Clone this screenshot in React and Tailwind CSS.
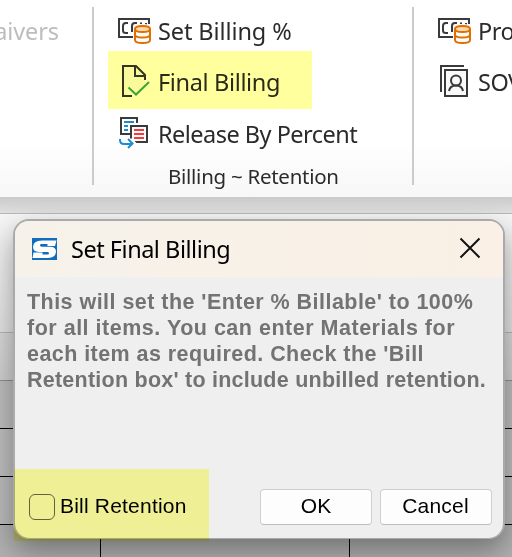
const UI = "font-['Noto_Sans',sans-serif]";
const ARIAL = "font-['Liberation_Sans',sans-serif]";

function BillingIcon() {
  return (
    <svg className="shrink-0" width="34" height="28" viewBox="0 0 34 28" fill="none">
      <path d="M16 20H1V2h30v5" stroke="#3a3a3a" strokeWidth="2" />
      <path d="M10 6H8Q5 6 5 9v4.500Q5 16 8 16h2M19 6h-2Q14 6 14 9v6M22 6.500h2M28 6v3" stroke="#3a3a3a" strokeWidth="2" />
      <path d="M17 12q0-3 7.500-3t7.500 3v11q0 3-7.500 3t-7.500-3z" fill="white" stroke="white" strokeWidth="4" />
      <path d="M17 12v11q0 3 7.500 3t7.500-3V12" fill="#fafafa" />
      <ellipse cx="24.500" cy="12" rx="7.200" ry="3" fill="#ffd9ad" />
      <path d="M17 12q0-3 7.500-3t7.500 3-7.500 3-7.500-3v11q0 3 7.500 3t7.500-3V12M17 17.500q0 3 7.500 3t7.500-3" stroke="#df7000" strokeWidth="2" />
    </svg>
  );
}

function FinalIcon() {
  return (
    <svg className="mt-px shrink-0" width="34" height="34" viewBox="0 0 34 34" fill="none">
      <path d="M5 2h13l9 9v9L18 29l-5-6H8l2 9H5z" fill="#fafa9a" />
      <path d="M14 32H5V2h13l9 9v5M17 2v10h10" stroke="#353522" strokeWidth="2" />
      <path d="M10.500 23.500l7.500 7L31 18" stroke="#3ba535" strokeWidth="2" />
    </svg>
  );
}

function ReleaseIcon() {
  return (
    <svg className="mt-px shrink-0" width="34" height="34" viewBox="0 0 34 34" fill="none">
      <path d="M13 18H3V2h16v5" stroke="#3a3a3a" strokeWidth="2" />
      <path d="M6 6h10M6 10h4M6 14h4" stroke="#1e8bd0" strokeWidth="2" />
      <path d="M13 10h16v16H13z" fill="#fafafa" stroke="#3a3a3a" strokeWidth="2" />
      <path d="M16 14h10M16 18h10M16 22h10" stroke="#f33b3b" strokeWidth="2" />
      <path d="M8 22.500h6l5 5-4 5H8z" fill="white" />
      <path d="M2 23v1q0 4 4 4h8M10 23l4.500 4.500L10 32" stroke="#1e8bd0" strokeWidth="2" />
    </svg>
  );
}

function SovIcon() {
  return (
    <svg className="-mt-[4px] shrink-0" width="34" height="34" viewBox="0 0 34 34" fill="none">
      <path d="M3 28V2h23" stroke="#3a3a3a" strokeWidth="2" />
      <path d="M7 6h22v26H7z" fill="#fafafa" stroke="#3a3a3a" strokeWidth="2" />
      <circle cx="18" cy="16.500" r="5" stroke="#3a3a3a" strokeWidth="2" />
      <path d="M11 27q1-5.500 7-5.500t7 5.500" stroke="#3a3a3a" strokeWidth="2" />
    </svg>
  );
}

function Item({ icon, className = "", labelClass = "", children }) {
  return (
    <div className={`flex h-[52px] items-center whitespace-nowrap ${className}`}>
      {icon}
      <span className={`ml-[6px] ${labelClass}`}>{children}</span>
    </div>
  );
}

function Ribbon() {
  return (
    <div className={`flex h-[197px] w-full overflow-hidden bg-linear-to-b from-white from-70% to-[#f7f7f7] text-[23.500px] text-[#2b2b2b] ${UI}`}>
      <div className="mt-[7px] flex h-[178px] w-[94px] shrink-0 justify-end border-r-2 border-[#cbcbcb] pr-[33px] text-[#bdbdbd]">
        <span className="leading-[49px] tracking-[-0.100px]">Waivers</span>
      </div>
      <div className="mt-[7px] h-[178px] w-[320px] shrink-0 border-r-2 border-[#cbcbcb] pl-[14px]">
        <div className="-mt-[2px] h-[46px] pl-[10px]">
          <Item className="tracking-[-0.100px]" labelClass="mt-px" icon={<BillingIcon />}>Set Billing %</Item>
        </div>
        <div className="flex h-[58px] w-[204px] items-center bg-[#ffff9e] pl-[10px] text-[#2a2a18]">
          <Item className="tracking-[-0.350px]" labelClass="mt-[6px]" icon={<FinalIcon />}>Final Billing</Item>
        </div>
        <div className="flex h-[46px] items-center pl-[10px]">
          <Item className="tracking-[-0.520px]" labelClass="mt-[6px]" icon={<ReleaseIcon />}>Release By Percent</Item>
        </div>
        <div className="pl-[60px] text-[20.500px] leading-[43px] tracking-[-0.270px]">Billing ~ Retention</div>
      </div>
      <div className="w-[98px] shrink-0 overflow-hidden pt-[5px] pl-[24px]">
        <Item className="tracking-[-0.500px]" labelClass="mt-px" icon={<BillingIcon />}>Project</Item>
        <Item className="tracking-[-0.500px]" icon={<SovIcon />}>SOV</Item>
      </div>
    </div>
  );
}

function Sheet() {
  return (
    <div className="h-[360px] bg-[#e9e9e9]">
      <div className="h-[17px] border-b border-[#b8b8b8] bg-linear-to-b from-[#cacaca] to-[#e0e0e0]" />
      <div className="h-[119px] border-b border-[#b5b5b5] bg-linear-to-b from-[#f5f5f5] to-[#e2e2e2]" />
      <div className="h-[48px] border-b border-[#8e8e8e] bg-linear-to-b from-[#d8d8d8] to-[#cfcfcf]" />
      <div className="h-[48px] border-b border-black bg-[#bdbdbd]" />
      <div className="h-[48px] border-b border-black bg-[#bdbdbd]" />
      <div className="flex h-[48px] border-b border-black bg-[#bababa]">
        <div className="w-[101px] border-r border-black" />
        <div className="w-[249px] border-r border-black" />
      </div>
      <div className="flex h-[32px] bg-[#b0b0b0]">
        <div className="w-[101px] border-r border-black" />
        <div className="w-[249px] border-r border-black" />
      </div>
    </div>
  );
}

function Dialog() {
  return (
    <div className="absolute top-[219px] left-[13px] flex h-[320px] w-[492px] flex-col overflow-hidden rounded-[16px] border-2 border-b border-[#aaaaaa] bg-[#efefef] shadow-[0_12px_28px_rgba(0,0,0,0.35)]">
      <div className={`flex h-[56px] shrink-0 items-center bg-linear-to-r from-[#f6f2ea] to-[#faf0e5] pr-[22px] pl-[17px] text-[23.500px] text-black ${UI}`}>
        <svg width="25" height="22" viewBox="0 0 25 22">
          <path d="M0 0h25v22H0z" fill="#116dbb" />
          <path d="M24.500 2.500L23 8H15.500V6H9.500Q8 6 8 7.300T9.500 8.700H18q6 0 6 4.800 0 6.500-9 6.500H.5L1.500 14.500H10.500v2H15.500q1.500 0 1.500-1.300t-1.500-1.300H7Q1 13.900 1 9q0-6.500 9-6.500z" fill="white" />
        </svg>
        <span className="mt-[2px] ml-[14px] whitespace-nowrap tracking-[-0.480px]">Set Final Billing</span>
        <svg className="-mt-[2px] ml-auto" width="22" height="22" viewBox="0 0 22 22">
          <path d="M1.500 1.500l19 19M20.500 1.500l-19 19" stroke="#111" strokeWidth="2" />
        </svg>
      </div>
      <div className={`mt-[12px] pl-[12px] text-[21.500px] leading-[26px] font-bold whitespace-nowrap text-[#737373] ${ARIAL}`}>
        <div className="tracking-[0.460px]">This will set the 'Enter % Billable' to 100%</div>
        <div className="tracking-[0.510px]">for all items. You can enter Materials for</div>
        <div className="tracking-[0.440px]">each item as required. Check the 'Bill</div>
        <div className="tracking-[0.240px]">Retention box' to include unbilled retention.</div>
      </div>
      <div className={`mt-auto flex h-[69px] shrink-0 text-[21px] text-black ${ARIAL}`}>
        <div className="flex w-[194px] items-center pl-[14px]">
          <span className="mt-[6px] size-[26px] shrink-0 rounded-[6px] border-[1.500px] border-[#626262]" />
          <span className="mt-[5px] ml-[5px] whitespace-nowrap tracking-[0.200px]">Bill Retention</span>
        </div>
        <div className="ml-auto flex gap-[8px] pt-[20px] pr-[11px]">
          <button className="h-[36px] w-[112px] rounded-[4px] border border-[#cfcfcf] border-b-[#bdbdbd] bg-[#fdfdfd] pb-[2px]">OK</button>
          <button className="h-[36px] w-[112px] rounded-[4px] border border-[#cfcfcf] border-b-[#bdbdbd] bg-[#fdfdfd] pr-px pb-[2px] tracking-[0.200px]">Cancel</button>
        </div>
      </div>
    </div>
  );
}

export default function App() {
  return (
    <div className="relative h-[557px] w-[512px] overflow-hidden">
      <Ribbon />
      <Sheet />
      <Dialog />
      <div className="pointer-events-none absolute top-[469px] left-[14px] h-[72px] w-[195px] bg-[#ffff9f] mix-blend-multiply" />
    </div>
  );
}
